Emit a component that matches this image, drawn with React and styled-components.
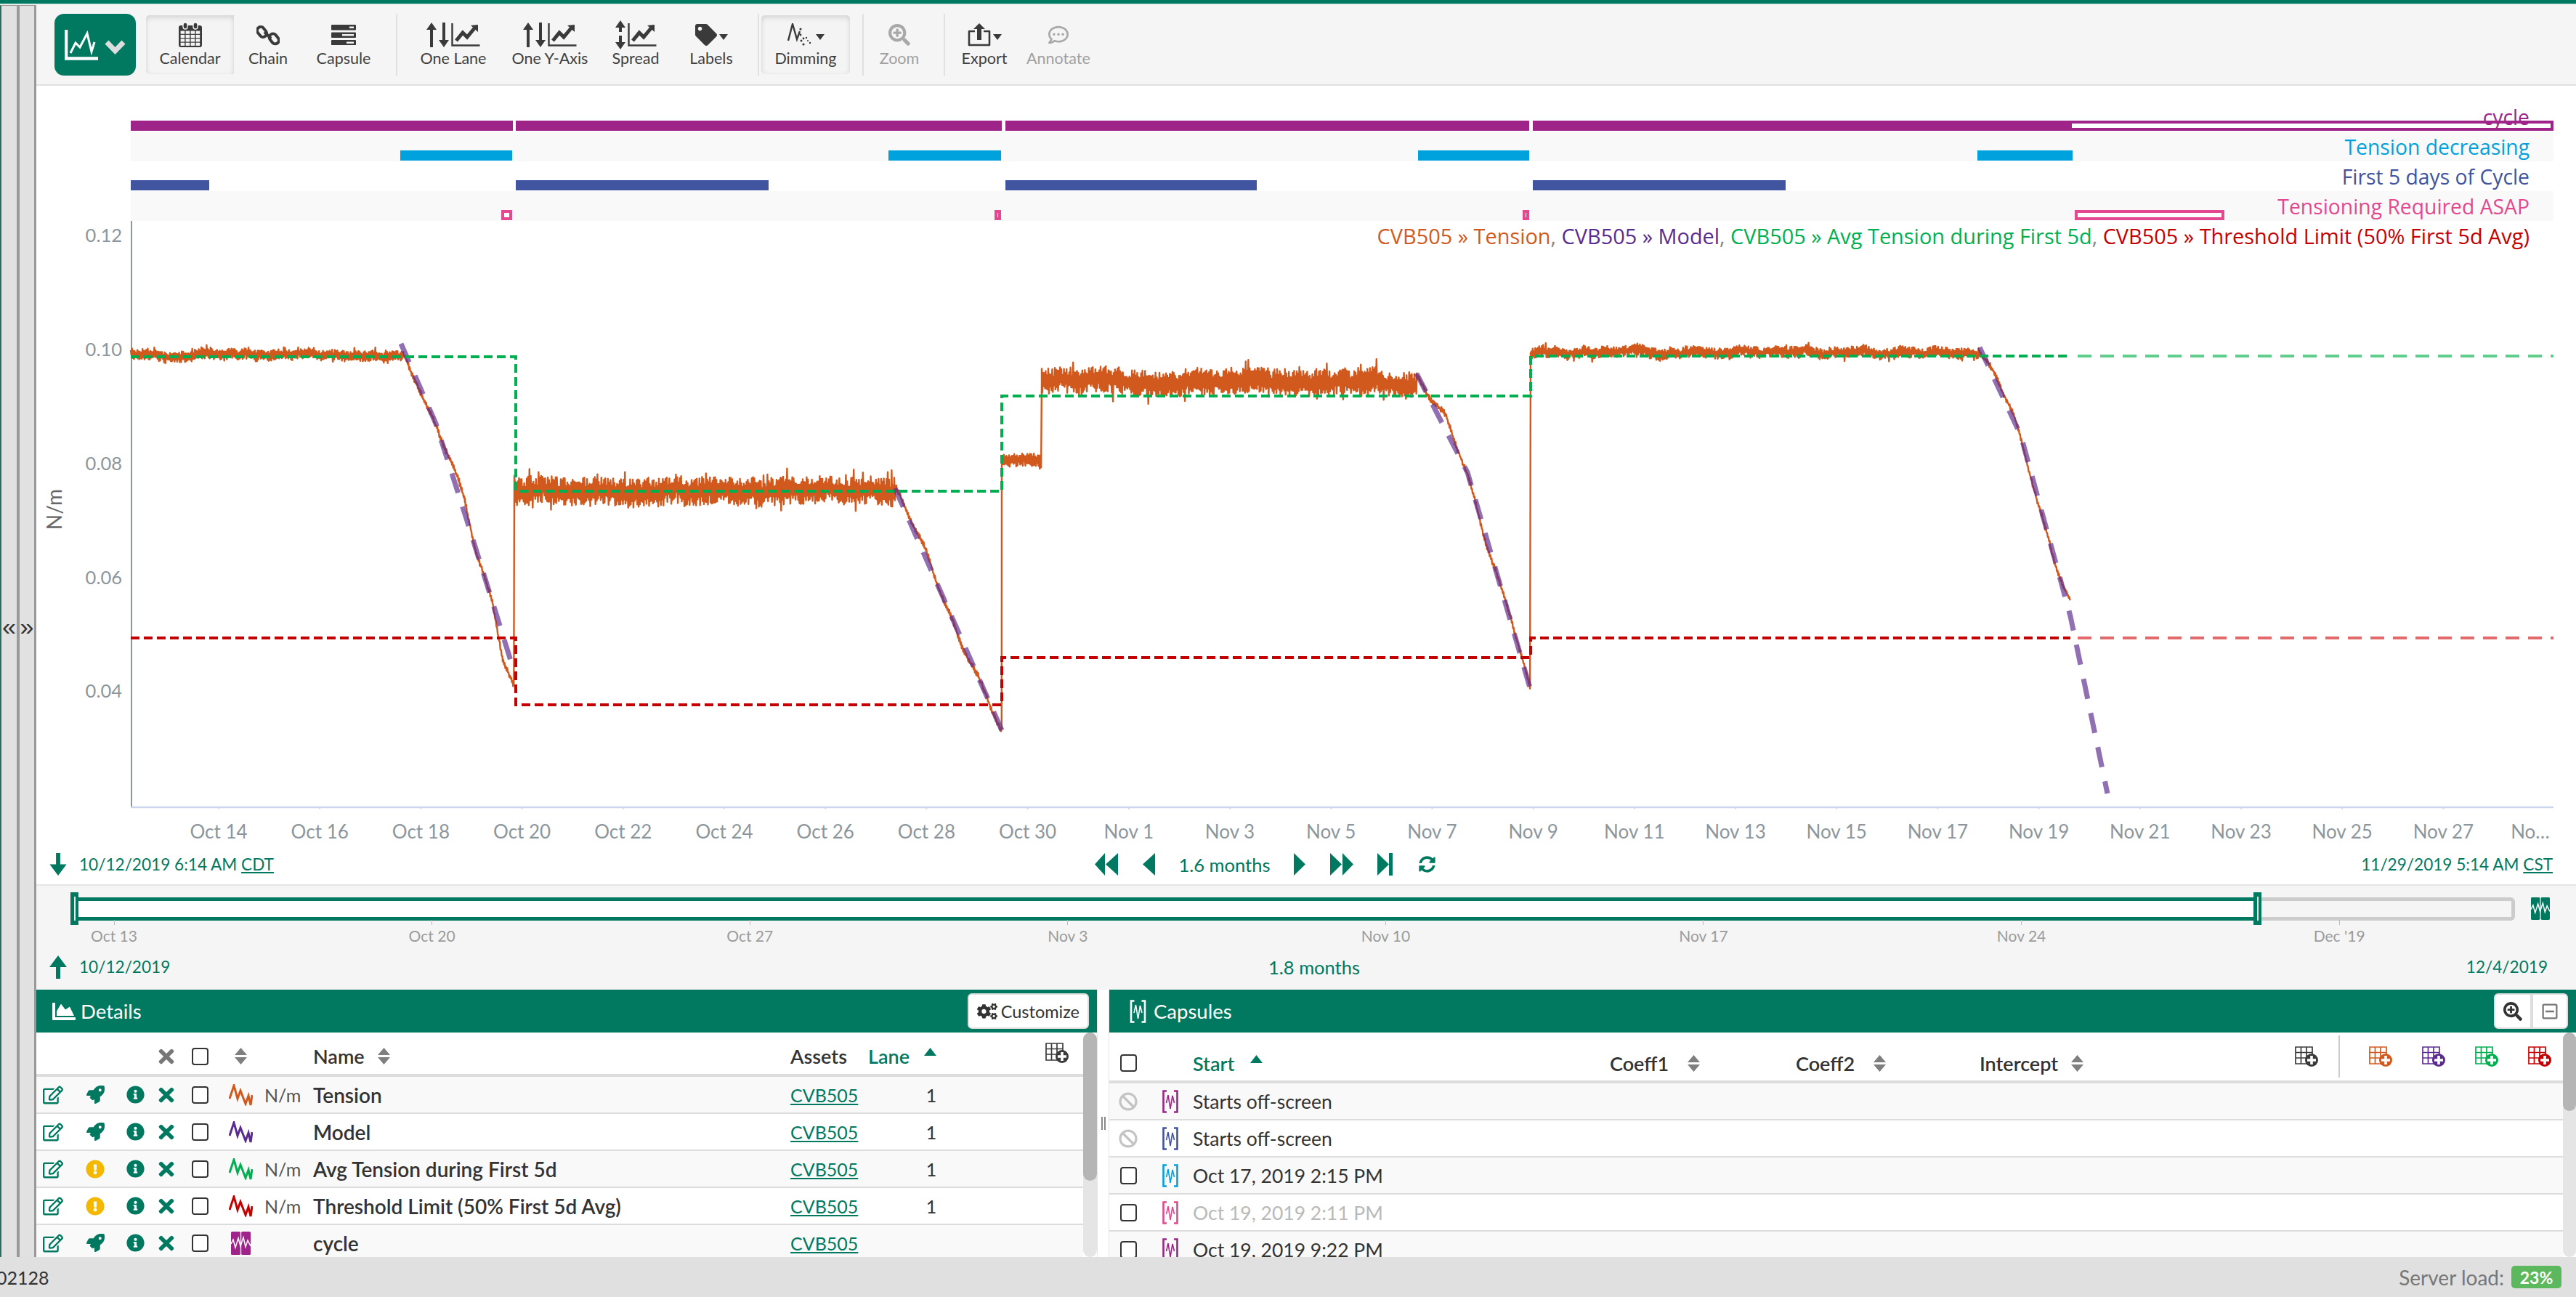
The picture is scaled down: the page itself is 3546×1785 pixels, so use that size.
import styled, { createGlobalStyle } from "styled-components";
import {
  FaBan,
  FaChartArea,
  FaCogs,
  FaExclamationCircle,
  FaInfoCircle,
  FaRegCommentDots,
  FaRegEdit,
  FaRegMinusSquare,
  FaRocket,
  FaSearchPlus,
  FaSyncAlt,
  FaTag,
  FaTimes,
} from "react-icons/fa";

const GREEN = "#007960";
const UI_FONT = `Lato, "Noto Sans", sans-serif`;
const CHART_FONT = `"Open Sans", "Noto Sans", sans-serif`;

const Global = createGlobalStyle`
  html, body { margin: 0; padding: 0; background: #fff; }
  * { box-sizing: border-box; }
`;

const Page = styled.div`
  width: 3546px;
  height: 1785px;
  display: flex;
  flex-direction: column;
  overflow: hidden;
  font-family: ${UI_FONT};
  color: #333;
  background: #f5f5f5;
`;
const TopLine = styled.div`
  height: 5px;
  flex: none;
  background: ${GREEN};
`;
const TopGap = styled.div`
  height: 2px;
  flex: none;
  background: #e4efec;
`;
const Main = styled.div`
  flex: 1;
  min-height: 0;
  display: flex;
`;
const Strip = styled.div`
  width: 50px;
  flex: none;
  display: flex;
  background: #e1e1e1;
  border-left: 2px solid #2d6e62;
  border-right: 3px solid #999;
  border-top: 1px solid #999;
`;
const StripHalf = styled.div`
  display: flex;
  align-items: center;
  justify-content: center;
  width: ${(p) => p.$w}px;
  border-right: ${(p) => (p.$divider ? "4px solid #999" : "none")};
  font-family: "Liberation Sans", sans-serif;
  font-size: 34px;
  line-height: 1;
  padding-bottom: 14px;
  color: #333;
`;
const Content = styled.div`
  flex: 1;
  min-width: 0;
  display: flex;
  flex-direction: column;
`;

/* toolbar */
const Toolbar = styled.div`
  height: 111px;
  flex: none;
  display: flex;
  align-items: flex-start;
  padding: 12px 0 0 25px;
  background: #f5f5f5;
  border-bottom: 2px solid #e1e1e1;
`;
const Logo = styled.div`
  width: 112px;
  height: 85px;
  margin-right: 14px;
  display: flex;
  align-items: center;
  justify-content: center;
  border-radius: 13px;
  background: ${GREEN};
`;
const ToolButton = styled.div`
  width: ${(p) => p.$w}px;
  height: 81px;
  margin-top: 2px;
  display: flex;
  flex-direction: column;
  align-items: center;
  padding-top: 7px;
  color: ${(p) => (p.$off ? "#a8a8a8" : "#3a3a3a")};
  border-radius: ${(p) => p.$radius || "5px"};
  background: ${(p) => (p.$active ? "#f4f4f4" : "transparent")};
  box-shadow: ${(p) =>
    p.$active ? "inset 0 4px 7px rgba(0,0,0,.1), inset 0 0 6px rgba(0,0,0,.05)" : "none"};
`;
const ToolIcon = styled.div`
  height: 40px;
  display: flex;
  align-items: center;
  justify-content: center;
  gap: 3px;
`;
const ToolLabel = styled.div`
  font-size: 21.5px;
  line-height: 24px;
  color: ${(p) => (p.$off ? "#a0a0a0" : "#3f3f3f")};
`;
const ToolSep = styled.div`
  width: 2px;
  height: 85px;
  flex: none;
  margin-left: ${(p) => p.$l}px;
  margin-right: ${(p) => p.$r}px;
  background: #e1e1e1;
`;
const Caret = styled.span`
  width: 0;
  height: 0;
  align-self: center;
  margin-top: 6px;
  border-left: 6px solid transparent;
  border-right: 6px solid transparent;
  border-top: 8px solid currentColor;
`;

/* chart */
const ChartPanel = styled.div`
  height: 1101px;
  flex: none;
  display: flex;
  flex-direction: column;
  padding-top: 23px;
  background: #fff;
  border-bottom: 2px solid #e5e5e5;
`;
const Lanes = styled.div`
  margin: 0 31px 0 130px;
  flex: none;
`;
const Lane = styled.div`
  position: relative;
  height: ${(p) => p.$h}px;
  display: flex;
  align-items: center;
  justify-content: flex-end;
  padding-right: 33px;
  background: ${(p) => (p.$shade ? "#f9f9f9" : "#fff")};
`;
const LaneLabel = styled.span`
  position: relative;
  z-index: 1;
  font-family: ${CHART_FONT};
  font-size: 28.3px;
  color: ${(p) => p.$color};
`;
const Bar = styled.div`
  position: absolute;
  bottom: 1px;
  left: ${(p) => p.$from - 180}px;
  width: ${(p) => p.$to - p.$from}px;
  height: 14px;
  background: ${(p) => (p.$hollow ? "#fff" : p.$color)};
  border: ${(p) => (p.$hollow ? `${p.$hollow}px solid ${p.$color}` : "none")};
`;
const ChartArea = styled.div`
  position: relative;
  flex: none;
  height: 860px;
`;
const Legend = styled.div`
  position: absolute;
  top: 0;
  right: 64px;
  font-family: ${CHART_FONT};
  font-size: 28.9px;
  line-height: 42px;
  white-space: nowrap;
  color: #888;
`;
const Series = styled.span`
  color: ${(p) => p.$color};
`;
const TimeRow = styled.div`
  flex: 1;
  display: flex;
  align-items: center;
  padding-bottom: 2px;
  color: ${GREEN};
  font-size: 22.6px;
`;
const TimeLeft = styled.div`
  width: 1457px;
  display: flex;
  align-items: center;
  gap: 17px;
  padding-left: 18px;
`;
const TimeRight = styled.div`
  margin-left: auto;
  padding-right: 32px;
`;
const Zone = styled.span`
  text-decoration: underline;
`;
const Nav = styled.div`
  display: flex;
  align-items: center;
`;
const NavSpan = styled.span`
  font-size: 25.5px;
  width: 191px;
  text-align: center;
`;

/* range */
const RangePanel = styled.div`
  height: 143px;
  flex: none;
  padding-top: 9px;
  background: #f5f5f5;
  display: flex;
  flex-direction: column;
`;
const RangeTrackRow = styled.div`
  display: flex;
  align-items: center;
  height: 45px;
  flex: none;
  padding-left: 47px;
`;
const Handle = styled.div`
  width: 11px;
  height: 45px;
  flex: none;
  background: ${GREEN};
  display: flex;
  align-items: center;
  justify-content: center;
  &::after {
    content: "";
    width: 2px;
    height: 33px;
    background: #dfeee9;
  }
`;
const Selected = styled.div`
  width: 2994px;
  height: 32px;
  flex: none;
  background: #fff;
  border-top: 5px solid ${GREEN};
  border-bottom: 5px solid ${GREEN};
`;
const Remainder = styled.div`
  width: 349px;
  height: 32px;
  flex: none;
  border: 5px solid #ccc;
  border-left: none;
  border-radius: 0 6px 6px 0;
  margin-right: 22px;
`;
const Ticks = styled.div`
  display: flex;
  gap: 337.6px;
  padding-left: 57px;
  margin-top: -7px;
  flex: none;
`;
const Tick = styled.div`
  width: 100px;
  flex: none;
  display: flex;
  flex-direction: column;
  align-items: center;
  color: #9b9b9b;
  font-size: 21px;
  line-height: 26px;
  &::before {
    content: "";
    width: 1px;
    height: 7px;
    margin-bottom: 2px;
    background: #bbb;
  }
`;
const RangeFoot = styled.div`
  flex: 1;
  display: flex;
  align-items: center;
  color: ${GREEN};
  font-size: 22.6px;
  padding-bottom: 2px;
`;
const RangeFootLeft = styled.div`
  width: 1696px;
  display: flex;
  align-items: center;
  gap: 17px;
  padding-left: 18px;
`;
const MonthsSpan = styled.span`
  font-size: 25.5px;
`;
const RangeFootRight = styled.div`
  margin-left: auto;
  padding-right: 39px;
`;

/* tables */
const Tables = styled.div`
  flex: 1;
  min-height: 0;
  display: flex;
  background: #fff;
`;
const Panel = styled.div`
  width: ${(p) => p.$w}px;
  flex: none;
  display: flex;
  flex-direction: column;
  min-height: 0;
`;
const Resizer = styled.div`
  width: 17px;
  flex: none;
  display: flex;
  gap: 2px;
  align-items: flex-start;
  justify-content: center;
  padding-top: 175px;
  background: #fff;
  border-left: 1px solid #e5e5e5;
  border-right: 1px solid #e5e5e5;
  &::before,
  &::after {
    content: "";
    width: 2px;
    height: 18px;
    background: #888;
  }
`;
const PanelHead = styled.div`
  height: 59px;
  flex: none;
  display: flex;
  align-items: center;
  gap: 7px;
  padding: 0 11px 0 ${(p) => p.$pad}px;
  color: #fff;
  font-size: 27.5px;
  background: ${GREEN};
`;
const PanelTitleGap = styled.span`
  margin-left: 3px;
`;
const HeadButtons = styled.div`
  margin-left: auto;
  display: flex;
`;
const HeadButton = styled.div`
  height: 49px;
  display: flex;
  align-items: center;
  gap: 5px;
  padding: 0 11px;
  background: #fff;
  color: #333;
  font-size: 23.5px;
  border: 2px solid #ddd;
  border-radius: ${(p) => p.$radius || "6px"};
`;
const PanelBody = styled.div`
  flex: 1;
  min-height: 0;
  display: flex;
  overflow: hidden;
`;
const Scroller = styled.div`
  width: ${(p) => p.$w}px;
  flex: none;
  border-radius: 10px;
  background: #e5e5e5;
`;
const Thumb = styled.div`
  height: ${(p) => p.$h}px;
  border-radius: 10px;
  background: #b5b5b5;
`;
const TableWrap = styled.div`
  flex: 1;
  min-width: 0;
  overflow: hidden;
`;
const Row = styled.div`
  display: grid;
  grid-template-columns: ${(p) => p.$cols};
  align-items: center;
  height: ${(p) => p.$h}px;
  padding-top: ${(p) => p.$top || 0}px;
  background: ${(p) => (p.$shade ? "#f9f9f9" : "#fff")};
  border-bottom: ${(p) => p.$border}px solid #ddd;
  font-size: 26.5px;
`;
const IconCell = styled.div`
  display: flex;
  justify-content: center;
  align-items: center;
  color: ${(p) => p.$color || GREEN};
`;
const HeadCell = styled.div`
  display: flex;
  align-items: center;
  gap: ${(p) => p.$gap || 18}px;
  font-weight: 600;
  font-size: 27px;
  color: ${(p) => p.$color || "#333"};
`;
const SortUpSlot = styled.div`
  display: flex;
  margin-top: -12px;
`;
const Check = styled.div`
  width: 23px;
  height: 24px;
  border: 2.5px solid #333;
  border-radius: 4px;
  background: #fff;
`;
const NameCell = styled.div`
  font-weight: 600;
  font-size: 28px;
  color: #333;
  white-space: nowrap;
`;
const Unit = styled.div`
  color: #555;
  font-size: 25px;
`;
const AssetLink = styled.a`
  color: ${GREEN};
  font-size: 25px;
  text-decoration: underline;
`;
const LaneValue = styled.div`
  text-align: center;
  font-size: 25px;
`;
const AddCell = styled.div`
  padding-left: 70px;
  display: flex;
  align-self: flex-start;
  padding-top: 6px;
`;
const CapsuleText = styled.div`
  color: ${(p) => (p.$faded ? "#b9b9b9" : "#333")};
  white-space: nowrap;
`;
const CapsuleTools = styled.div`
  display: flex;
  align-items: center;
  align-self: stretch;
  margin-top: -18px;
  gap: 41px;
`;
const ToolDivider = styled.div`
  width: 2px;
  height: 58px;
  margin: 0 -1px 0 -13px;
  background: #ccc;
`;

const Footer = styled.div`
  height: 55px;
  flex: none;
  display: flex;
  align-items: center;
  background: #e0e0e0;
  font-size: 25px;
  padding-right: 20px;
`;
const FooterId = styled.div`
  margin-left: -5px;
  color: #333;
`;
const ServerLoad = styled.div`
  margin-left: auto;
  font-size: 28px;
  color: #777;
`;
const Badge = styled.div`
  margin-left: 10px;
  width: 69px;
  height: 31px;
  display: flex;
  align-items: center;
  justify-content: center;
  color: #fff;
  font-size: 23px;
  font-weight: 700;
  background: #5cb85c;
  border-radius: 5px;
`;
const NavGlyph = styled.span`
  display: flex;
  flex: none;
  width: ${(p) => p.$w}px;
  margin-left: ${(p) => p.$l || 0}px;
  color: ${GREEN};
`;

/* drawings */
const LogoMark = () => (
  <svg width="84" height="42" viewBox="0 0 84 42">
    <path d="M2 0v39.500h44" fill="none" stroke="#fff" strokeWidth="4.500" />
    <path d="M8 32L15 18l6 6L31 5l6 25 4-13" fill="none" stroke="#fff" strokeWidth="3" />
    <path d="M58 17l11.500 12L81 17" fill="none" stroke="#ddd" strokeWidth="7" />
  </svg>
);
const CalendarIcon = () => (
  <svg width="32" height="34" viewBox="0 0 32 34">
    <rect x="0" y="4" width="32" height="30" rx="3" fill="#3a3a3a" />
    <rect x="6" y="0" width="6" height="9" rx="3" fill="#3a3a3a" stroke="#f4f4f4" strokeWidth="1.4" />
    <rect x="20" y="0" width="6" height="9" rx="3" fill="#3a3a3a" stroke="#f4f4f4" strokeWidth="1.4" />
    {[0, 1, 2, 3].map((c) =>
      [0, 1, 2, 3].map((r) => (
        <rect key={`${c}${r}`} x={2.6 + c * 7} y={11.5 + r * 5.4} width="5.6" height="4.2" fill="#f4f4f4" />
      ))
    )}
  </svg>
);
const ChainIcon = () => (
  <svg width="32" height="32" viewBox="0 0 32 32" fill="none" stroke="#3a3a3a" strokeWidth="4">
    <rect x="2.5" y="4.5" width="10" height="15" rx="5" transform="rotate(-38 7.5 12)" />
    <rect x="19" y="14" width="10" height="15" rx="5" transform="rotate(-38 24 21)" />
    <path d="M11 12l9 9" />
  </svg>
);
const CapsuleBarsIcon = () => (
  <svg width="34" height="28" viewBox="0 0 34 28">
    {[0, 10.5, 21].map((y, i) => (
      <g key={y}>
        <rect x="0" y={y} width="34" height="7.4" rx="1" fill="#3a3a3a" />
        <rect x={[25, 15, 21][i]} y={y + 2.5} width={[6, 16, 10][i]} height="2.4" fill="#f5f5f5" />
      </g>
    ))}
  </svg>
);
const ArrowV = ({ up, h = 34 }) => (
  <svg width="14" height={h} viewBox={`0 0 14 ${h}`}>
    {up ? (
      <path d={`M7 0l7 10H9v${h - 10}H5V10H0z`} fill="#3a3a3a" />
    ) : (
      <path d={`M7 ${h}l7-10H9V0H5v${h - 10}H0z`} fill="#3a3a3a" />
    )}
  </svg>
);
const ChartMark = ({ w = 40, h = 32 }) => (
  <svg width={w} height={h} viewBox="0 0 40 32">
    <path d="M1.5 0v30.500h38" fill="none" stroke="#3a3a3a" strokeWidth="2.4" />
    <path d="M7 24l9-11 6 6 10-12" fill="none" stroke="#3a3a3a" strokeWidth="5" />
    <path d="M27 3l10-1v10z" fill="#3a3a3a" />
  </svg>
);
const DimmingIcon = () => (
  <svg width="36" height="32" viewBox="0 0 36 32">
    <path d="M1 24L7 1l6 21 4-11" fill="none" stroke="#3a3a3a" strokeWidth="2.4" />
    <g fill="#3a3a3a">
      <circle cx="18" cy="8" r="1.6" />
      <circle cx="18" cy="16" r="1.4" />
      <circle cx="22" cy="21" r="1.4" />
      <circle cx="19" cy="24" r="1.5" />
      <circle cx="26" cy="20" r="1.2" />
      <circle cx="22" cy="29" r="1.6" />
      <circle cx="31" cy="27" r="1.2" />
      <circle cx="28" cy="24" r="1" />
    </g>
  </svg>
);
const ExportIcon = () => (
  <svg width="32" height="32" viewBox="0 0 32 32">
    <path d="M10 11H2v19h28V11h-8" fill="none" stroke="#3a3a3a" strokeWidth="2.6" strokeLinejoin="round" />
    <path d="M16 0l8 8h-5v15h-6V8H8z" fill="#3a3a3a" />
  </svg>
);
const Triangle = ({ dir = "left", w = 16, h = 31, color = GREEN, bar }) => (
  <svg width={w + (bar ? 5 : 0)} height={h} viewBox={`0 0 ${w + (bar ? 5 : 0)} ${h}`}>
    {dir === "left" ? (
      <path d={`M0 ${h / 2}L${w} 0v${h}z`} fill={color} />
    ) : (
      <path d={`M0 0L${w} ${h / 2}L0 ${h}z`} fill={color} />
    )}
    {bar && <rect x={w} y="0" width="5" height={h} fill={color} />}
  </svg>
);
const DoubleLeft = () => (
  <NavGlyph $w={32}>
    <svg width="32" height="31" viewBox="0 0 32 31">
      <path d="M0 15.500L14 0v31zM15 15.500L32 0v31z" fill={GREEN} />
    </svg>
  </NavGlyph>
);
const DoubleRight = () => (
  <NavGlyph $w={32}>
    <svg width="32" height="31" viewBox="0 0 32 31">
      <path d="M0 0l16 15.500L0 31zM17 0l15 15.500L17 31z" fill={GREEN} />
    </svg>
  </NavGlyph>
);
const ArrowDownGreen = ({ up }) => (
  <svg width="24" height={up ? 32 : 31} viewBox="0 0 24 32">
    {up ? (
      <path d="M12 0l12 16h-9v16H9V16H0z" fill={GREEN} />
    ) : (
      <path d="M12 32L24 16h-9V0H9v16H0z" fill={GREEN} />
    )}
  </svg>
);
const SortIcon = () => (
  <svg width="17" height="23" viewBox="0 0 17 23">
    <path d="M8.500 0L17 10H0zM0 13h17l-8.500 10z" fill="#7f7f7f" />
  </svg>
);
const SortUpIcon = () => (
  <svg width="17" height="11" viewBox="0 0 17 11">
    <path d="M8.500 0L17 11H0z" fill={GREEN} />
  </svg>
);
const WaveIcon = ({ color }) => (
  <svg width="33" height="30" viewBox="0 0 33 30">
    <path d="M1 20L7 2l5 18 4-11 7 18 4-11 3 13 2-14" fill="none" stroke={color} strokeWidth="3" />
  </svg>
);
const SolidCapsule = ({ color, w = 27, h = 32 }) => (
  <svg width={w} height={h} viewBox="0 0 27 32">
    <rect x="0" y="0" width="12.800" height="32" rx="1.500" fill={color} />
    <rect x="14.200" y="0" width="12.800" height="32" rx="1.500" fill={color} />
    <path d="M0 17l3-6 3 11 4-13 3 11 4-12 3 13 3-9 4 8" fill="none" stroke="#fff" strokeWidth="1.500" />
  </svg>
);
const BracketIcon = ({ color, stroke, w = 22, h = 32 }) => (
  <svg width={w} height={h} viewBox="0 0 22 32" fill="none" stroke={color} strokeWidth={stroke || 2.6}>
    <path d="M6 1.500H1.500v29H6M16 1.500h4.500v29H16" />
    <path d="M5.500 18L8 7l3 19 3-18 2.500 10" strokeWidth="1.600" />
  </svg>
);
const TableAdd = ({ color = "#3a3a3a" }) => (
  <svg width="32" height="28" viewBox="0 0 32 28">
    <path d="M1 1h23v23H1zM1 8.500h23M1 16h23M8.500 1v23M16 1v23" fill="none" stroke={color} strokeWidth="1.700" />
    <circle cx="23" cy="19" r="9" fill={color} />
    <path d="M23 13v12M17 19h12" stroke="#fff" strokeWidth="3.600" />
  </svg>
);

/* chart data, in page pixels */
const TRACE = "#d2591d";
const MODEL = "#5b2c8f";
const AVG = "#00b050";
const LIMIT = "#c40000";

function rng(seed) {
  let s = seed;
  return () => {
    s = (s * 1664525 + 1013904223) % 4294967296;
    return s / 4294967296;
  };
}
const rand = rng(42);

// noisy flat run: zigzags up and down so the line fills a band like the real data
function flat(x0, x1, y, amp, wander) {
  const pts = [];
  let drift = 0;
  let flip = 1;
  for (let x = x0; x < x1; x += 0.9) {
    drift += (rand() - 0.5) * 1.8;
    drift *= 0.97;
    flip = -flip;
    const spike = rand() < 0.05 ? 1.6 : 1;
    pts.push([x, y + drift * wander + flip * (0.3 + rand() * 0.7) * amp * spike]);
  }
  return pts;
}
function decline(points) {
  const pts = [];
  let flip = 1;
  for (let i = 0; i < points.length - 1; i++) {
    const [ax, ay] = points[i];
    const [bx, by] = points[i + 1];
    for (let x = ax; x < bx; x += 0.9) {
      const t = (x - ax) / (bx - ax);
      flip = -flip;
      const wob = Math.sin(x / 6) * 3 + Math.sin(x / 17) * 4;
      pts.push([x, ay + (by - ay) * t + wob + flip * rand() * 4]);
    }
  }
  return pts;
}
const tracePoints = [
  ...flat(180, 555, 488, 7.5, 1.6),
  ...decline([
    [555, 486],
    [575, 526],
    [593, 574],
    [622, 640],
    [640, 690],
    [656, 758],
    [678, 826],
    [692, 905],
    [708, 952],
  ]),
  [708, 655],
  ...flat(709, 1232, 676, 20, 1),
  ...decline([
    [1232, 672],
    [1278, 769],
    [1323, 882],
    [1379, 1010],
  ]),
  [1379, 640],
  ...flat(1380, 1434, 634, 9, 1),
  [1434, 524],
  ...flat(1434, 1950, 524, 18, 1.2),
  ...decline([
    [1950, 516],
    [1990, 577],
    [2020, 656],
    [2047, 747],
    [2080, 848],
    [2107, 957],
  ]),
  [2107, 486],
  ...flat(2108, 2725, 486, 7.5, 1.4),
  ...decline([
    [2725, 482],
    [2770, 566],
    [2800, 667],
    [2827, 769],
    [2850, 832],
  ]),
];
const toPath = (pts) => "M" + pts.map((p) => `${p[0].toFixed(1)} ${p[1].toFixed(1)}`).join("L");
const tracePath = toPath(tracePoints);

const yTicks = [
  ["0.12", 324],
  ["0.10", 481],
  ["0.08", 638],
  ["0.06", 795],
  ["0.04", 951],
];
const xLabels = [
  "Oct 14", "Oct 16", "Oct 18", "Oct 20", "Oct 22", "Oct 24", "Oct 26", "Oct 28", "Oct 30",
  "Nov 1", "Nov 3", "Nov 5", "Nov 7", "Nov 9", "Nov 11", "Nov 13", "Nov 15", "Nov 17",
  "Nov 19", "Nov 21", "Nov 23", "Nov 25", "Nov 27",
];

const TrendChart = () => (
  <svg width="3496" height="860" viewBox="50 304 3496 860" style={{ display: "block" }}>
    <path d="M181 302V1110" stroke="#8f979c" strokeWidth="2" />
    <path d="M180 1111H3515" stroke="#ccd6eb" strokeWidth="2.500" />
    {xLabels.map((label, i) => (
      <g key={label}>
        <path d={`M${301 + i * 139.2} 1110v4`} stroke="#ccd6eb" strokeWidth="1.500" />
        <text
          x={301 + i * 139.2}
          y="1154"
          textAnchor="middle"
          fontFamily={UI_FONT}
          fontSize="26"
          fill="#8c969d"
        >
          {label}
        </text>
      </g>
    ))}
    <text x="3483" y="1154" textAnchor="middle" fontFamily={UI_FONT} fontSize="26" fill="#8c969d">
      No…
    </text>
    {yTicks.map(([label, y]) => (
      <text key={label} x="168" y={y + 9} textAnchor="end" fontFamily={UI_FONT} fontSize="25.500" fill="#8c969d">
        {label}
      </text>
    ))}
    <text
      transform="translate(85 701) rotate(-90)"
      textAnchor="middle"
      fontFamily={UI_FONT}
      fontSize="28"
      fill="#666"
    >
      N/m
    </text>
    <path d={tracePath} fill="none" stroke={TRACE} strokeWidth="2.400" strokeLinejoin="round" />
    <g fill="none" stroke={MODEL} strokeOpacity=".68" strokeWidth="7" strokeDasharray="28 20">
      <path d="M552 473L600 583L643 717L708 925" />
      <path d="M1232 672L1379 1005" />
      <path d="M1950 514L2020 650L2107 950" />
      <path d="M2725 478L2782 600L2850 848L2901 1092" />
    </g>
    <g fill="none" stroke={AVG} strokeWidth="4" strokeDasharray="12 6">
      <path d="M180 491H710V676H1379V545H2107V490H2850" />
    </g>
    <path d="M2860 490H3515" fill="none" stroke="#5fce8d" strokeWidth="4" strokeDasharray="19 12" />
    <g fill="none" stroke={LIMIT} strokeWidth="4" strokeDasharray="12 6">
      <path d="M180 878H710V970H1379V905H2107V878H2850" />
    </g>
    <path d="M2860 878H3515" fill="none" stroke="#e36a6a" strokeWidth="4" strokeDasharray="19 12" />
  </svg>
);

const lanes = [
  {
    h: 40,
    label: "cycle",
    color: "#9f2489",
    bars: [
      [180, 706],
      [710, 1379],
      [1384, 2105],
      [2110, 2848],
    ],
    hollow: [[2848, 3515, 4]],
  },
  {
    h: 41,
    shade: true,
    label: "Tension decreasing",
    color: "#00a2dd",
    bars: [
      [551, 705],
      [1223, 1378],
      [1952, 2105],
      [2722, 2853],
    ],
  },
  {
    h: 41,
    label: "First 5 days of Cycle",
    color: "#4054a0",
    bars: [
      [180, 288],
      [710, 1058],
      [1384, 1730],
      [2110, 2458],
    ],
  },
  {
    h: 41,
    shade: true,
    label: "Tensioning Required ASAP",
    color: "#e4488f",
    hollow: [
      [690, 705, 4],
      [1369, 1378, 4],
      [2096, 2105, 4],
      [2856, 3062, 4],
    ],
  },
];

const rangeTicks = ["Oct 13", "Oct 20", "Oct 27", "Nov 3", "Nov 10", "Nov 17", "Nov 24", "Dec '19"];

const DETAIL_COLS = "46px 70px 40px 46px 46px 66px 67px 657px 107px 174px 121px";
const CAPSULE_COLS = "52px 63px 574px 256px 253px 434px auto";

const details = [
  { name: "Tension", unit: "N/m", wave: TRACE, lane: "1" },
  { name: "Model", unit: "", wave: MODEL, lane: "1" },
  { name: "Avg Tension during First 5d", unit: "N/m", wave: AVG, lane: "1", warn: true },
  { name: "Threshold Limit (50% First 5d Avg)", unit: "N/m", wave: LIMIT, lane: "1", warn: true },
  { name: "cycle", unit: "", solid: "#9f2489", lane: "" },
];

const capsules = [
  { text: "Starts off-screen", color: "#9f2489", off: true },
  { text: "Starts off-screen", color: "#4054a0", off: true },
  { text: "Oct 17, 2019 2:15 PM", color: "#00a2dd" },
  { text: "Oct 19, 2019 2:11 PM", color: "#e4488f", faded: true },
  { text: "Oct 19, 2019 9:22 PM", color: "#9f2489" },
];

const DetailsTable = () => (
  <TableWrap>
    <Row $cols={DETAIL_COLS} $h={61} $border={4} $top={8}>
      <span />
      <span />
      <span />
      <IconCell $color="#777">
        <FaTimes size={30} />
      </IconCell>
      <IconCell>
        <Check />
      </IconCell>
      <IconCell>
        <SortIcon />
      </IconCell>
      <span />
      <HeadCell>
        Name
        <SortIcon />
      </HeadCell>
      <HeadCell>Assets</HeadCell>
      <HeadCell $color={GREEN} $gap={20}>
        Lane
        <SortUpSlot>
          <SortUpIcon />
        </SortUpSlot>
      </HeadCell>
      <AddCell>
        <TableAdd />
      </AddCell>
    </Row>
    {details.map((d, i) => (
      <Row key={d.name} $cols={DETAIL_COLS} $h={51} $border={2} $shade={i % 2 === 0}>
        <IconCell>
          <FaRegEdit size={28} />
        </IconCell>
        <IconCell $color={d.warn ? "#f5b800" : GREEN}>
          {d.warn ? <FaExclamationCircle size={26} /> : <FaRocket size={25} />}
        </IconCell>
        <IconCell>
          <FaInfoCircle size={25} />
        </IconCell>
        <IconCell>
          <FaTimes size={30} />
        </IconCell>
        <IconCell>
          <Check />
        </IconCell>
        <IconCell>{d.solid ? <SolidCapsule color={d.solid} /> : <WaveIcon color={d.wave} />}</IconCell>
        <Unit>{d.unit}</Unit>
        <NameCell>{d.name}</NameCell>
        <div>
          <AssetLink>CVB505</AssetLink>
        </div>
        <LaneValue>{d.lane}</LaneValue>
        <span />
      </Row>
    ))}
  </TableWrap>
);

const CapsulesTable = () => (
  <TableWrap>
    <Row $cols={CAPSULE_COLS} $h={70} $border={4} $top={18}>
      <IconCell>
        <Check />
      </IconCell>
      <span />
      <HeadCell $color={GREEN} $gap={22}>
        Start
        <SortUpSlot>
          <SortUpIcon />
        </SortUpSlot>
      </HeadCell>
      <HeadCell $gap={26}>
        Coeff1
        <SortIcon />
      </HeadCell>
      <HeadCell $gap={26}>
        Coeff2
        <SortIcon />
      </HeadCell>
      <HeadCell $gap={18}>
        Intercept
        <SortIcon />
      </HeadCell>
      <CapsuleTools>
        <TableAdd />
        <ToolDivider />
        <TableAdd color={TRACE} />
        <TableAdd color={MODEL} />
        <TableAdd color={AVG} />
        <TableAdd color={LIMIT} />
      </CapsuleTools>
    </Row>
    {capsules.map((c, i) => (
      <Row key={c.text + c.color} $cols={CAPSULE_COLS} $h={51} $border={2} $shade={i % 2 === 0}>
        <IconCell $color="#c4c4c4">{c.off ? <FaBan size={26} /> : <Check />}</IconCell>
        <IconCell>
          <BracketIcon color={c.color} />
        </IconCell>
        <CapsuleText $faded={c.faded}>{c.text}</CapsuleText>
      </Row>
    ))}
  </TableWrap>
);

const App = () => (
  <Page>
    <Global />
    <TopLine />
    <TopGap />
    <Main>
      <Strip>
        <StripHalf $w={25} $divider>
          «
        </StripHalf>
        <StripHalf $w={20}>»</StripHalf>
      </Strip>
      <Content>
        <Toolbar>
          <Logo>
            <LogoMark />
          </Logo>
          <ToolButton $w={121} $active $radius="5px 0 0 5px">
            <ToolIcon>
              <CalendarIcon />
            </ToolIcon>
            <ToolLabel>Calendar</ToolLabel>
          </ToolButton>
          <ToolButton $w={94}>
            <ToolIcon>
              <ChainIcon />
            </ToolIcon>
            <ToolLabel>Chain</ToolLabel>
          </ToolButton>
          <ToolButton $w={114}>
            <ToolIcon>
              <CapsuleBarsIcon />
            </ToolIcon>
            <ToolLabel>Capsule</ToolLabel>
          </ToolButton>
          <ToolSep $l={15} $r={13} />
          <ToolButton $w={128}>
            <ToolIcon>
              <ArrowV up />
              <ArrowV />
              <ChartMark />
            </ToolIcon>
            <ToolLabel>One Lane</ToolLabel>
          </ToolButton>
          <ToolButton $w={138}>
            <ToolIcon>
              <ArrowV up />
              <ArrowV />
              <ChartMark />
            </ToolIcon>
            <ToolLabel>One Y-Axis</ToolLabel>
          </ToolButton>
          <ToolButton $w={98}>
            <ToolIcon>
              <svg width="14" height="40" viewBox="0 0 14 40">
                <path d="M7 0l7 10H9v6H5v-6H0zM7 40l7-10H9v-9H5v9H0z" fill="#3a3a3a" />
              </svg>
              <ChartMark />
            </ToolIcon>
            <ToolLabel>Spread</ToolLabel>
          </ToolButton>
          <ToolButton $w={110}>
            <ToolIcon>
              <FaTag size={30} />
              <Caret />
            </ToolIcon>
            <ToolLabel>Labels</ToolLabel>
          </ToolButton>
          <ToolSep $l={9} $r={3} />
          <ToolButton $w={122} $active>
            <ToolIcon>
              <DimmingIcon />
              <Caret />
            </ToolIcon>
            <ToolLabel>Dimming</ToolLabel>
          </ToolButton>
          <ToolSep $l={17} $r={0} />
          <ToolButton $w={98} $off>
            <ToolIcon>
              <FaSearchPlus size={30} />
            </ToolIcon>
            <ToolLabel $off>Zoom</ToolLabel>
          </ToolButton>
          <ToolSep $l={12} $r={0} />
          <ToolButton $w={108}>
            <ToolIcon>
              <ExportIcon />
              <Caret />
            </ToolIcon>
            <ToolLabel>Export</ToolLabel>
          </ToolButton>
          <ToolButton $w={96} $off>
            <ToolIcon>
              <FaRegCommentDots size={28} />
            </ToolIcon>
            <ToolLabel $off>Annotate</ToolLabel>
          </ToolButton>
        </Toolbar>

        <ChartPanel>
          <Lanes>
            {lanes.map((lane) => (
              <Lane key={lane.label} $h={lane.h} $shade={lane.shade}>
                {(lane.bars || []).map(([from, to]) => (
                  <Bar key={from} $from={from} $to={to} $color={lane.color} />
                ))}
                {(lane.hollow || []).map(([from, to, b]) => (
                  <Bar key={from} $from={from} $to={to} $color={lane.color} $hollow={b} />
                ))}
                <LaneLabel $color={lane.color}>{lane.label}</LaneLabel>
              </Lane>
            ))}
          </Lanes>
          <ChartArea>
            <TrendChart />
            <Legend>
              <Series $color={TRACE}>CVB505 » Tension</Series>,{" "}
              <Series $color={MODEL}>CVB505 » Model</Series>,{" "}
              <Series $color={AVG}>CVB505 » Avg Tension during First 5d</Series>,{" "}
              <Series $color={LIMIT}>CVB505 » Threshold Limit (50% First 5d Avg)</Series>
            </Legend>
          </ChartArea>
          <TimeRow>
            <TimeLeft>
              <ArrowDownGreen />
              <span>
                10/12/2019 6:14 AM <Zone>CDT</Zone>
              </span>
            </TimeLeft>
            <Nav>
              <DoubleLeft />
              <NavGlyph $w={17} $l={34}>
                <Triangle dir="left" w={17} />
              </NavGlyph>
              <NavSpan>1.6 months</NavSpan>
              <NavGlyph $w={16}>
                <Triangle dir="right" />
              </NavGlyph>
              <NavGlyph $w={32} $l={34}>
                <DoubleRight />
              </NavGlyph>
              <NavGlyph $w={21} $l={33}>
                <Triangle dir="right" bar />
              </NavGlyph>
              <NavGlyph $w={23} $l={36}>
                <FaSyncAlt size={23} />
              </NavGlyph>
            </Nav>
            <TimeRight>
              11/29/2019 5:14 AM <Zone>CST</Zone>
            </TimeRight>
          </TimeRow>
        </ChartPanel>

        <RangePanel>
          <RangeTrackRow>
            <Handle />
            <Selected />
            <Handle />
            <Remainder />
            <SolidCapsule color={GREEN} w={26} h={31} />
          </RangeTrackRow>
          <Ticks>
            {rangeTicks.map((t) => (
              <Tick key={t}>{t}</Tick>
            ))}
          </Ticks>
          <RangeFoot>
            <RangeFootLeft>
              <ArrowDownGreen up />
              <span>10/12/2019</span>
            </RangeFootLeft>
            <MonthsSpan>1.8 months</MonthsSpan>
            <RangeFootRight>12/4/2019</RangeFootRight>
          </RangeFoot>
        </RangePanel>

        <Tables>
          <Panel $w={1460}>
            <PanelHead $pad={22}>
              <FaChartArea size={32} />
              Details
              <HeadButtons>
                <HeadButton>
                  <FaCogs size={28} />
                  Customize
                </HeadButton>
              </HeadButtons>
            </PanelHead>
            <PanelBody>
              <DetailsTable />
              <Scroller $w={19}>
                <Thumb $h={204} />
              </Scroller>
            </PanelBody>
          </Panel>
          <Resizer />
          <Panel $w={2019}>
            <PanelHead $pad={28}>
              <BracketIcon color="#fff" w={23} h={32} />
              <PanelTitleGap>Capsules</PanelTitleGap>
              <HeadButtons>
                <HeadButton $radius="6px 0 0 6px">
                  <FaSearchPlus size={26} />
                </HeadButton>
                <HeadButton $radius="0 6px 6px 0">
                  <FaRegMinusSquare size={24} color="#777" />
                </HeadButton>
              </HeadButtons>
            </PanelHead>
            <PanelBody>
              <CapsulesTable />
              <Scroller $w={18}>
                <Thumb $h={108} />
              </Scroller>
            </PanelBody>
          </Panel>
        </Tables>
      </Content>
    </Main>
    <Footer>
      <FooterId>02128</FooterId>
      <ServerLoad>Server load:</ServerLoad>
      <Badge>23%</Badge>
    </Footer>
  </Page>
);

export default App;
